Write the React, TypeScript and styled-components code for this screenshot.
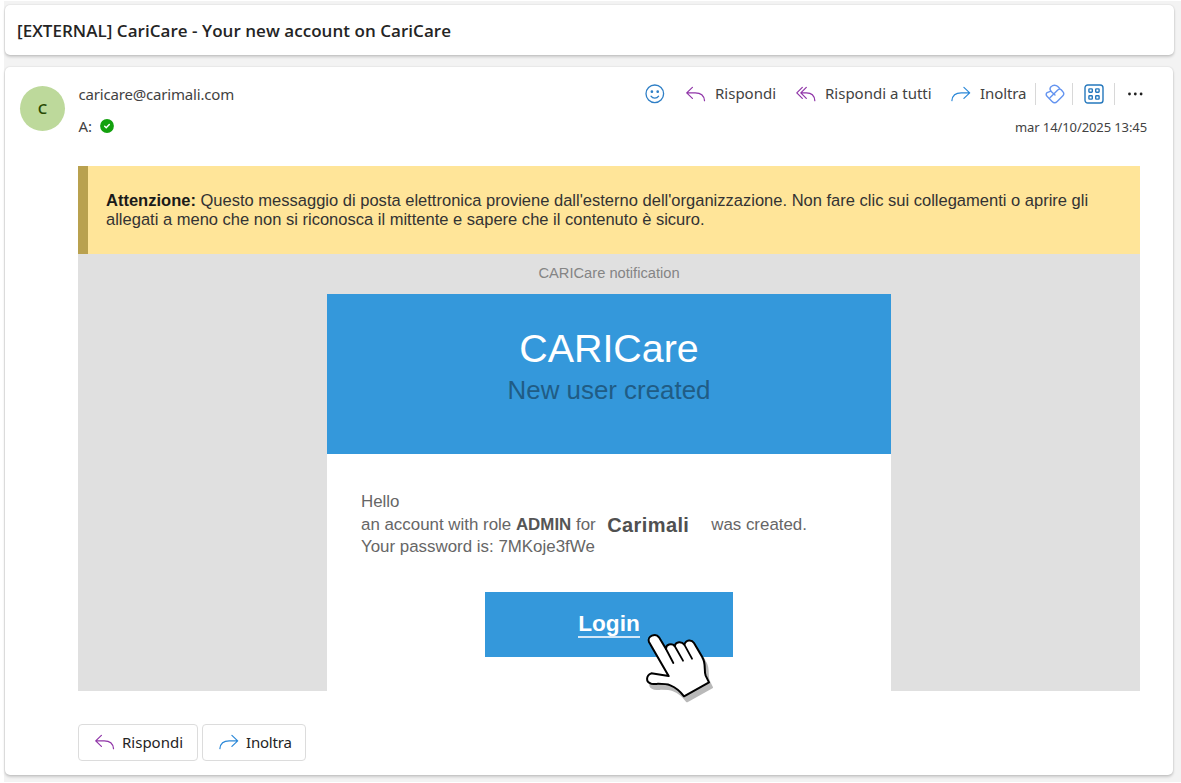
import React from "react";
import styled, { createGlobalStyle } from "styled-components";

const ui = `"Noto Sans", "Open Sans", sans-serif`;
const arial = `"Liberation Sans", Arial, sans-serif`;

const GlobalStyle = createGlobalStyle`
  * { box-sizing: border-box; }
  body { margin: 0; background: #fff; overflow: hidden; }
  svg { display: block; flex: none; }
`;

const Page = styled.div`
  width: 1181px;
  height: 783px;
  padding: 1px 0 1px 4px;
  background: #fff;
`;

const Pane = styled.main`
  height: 781px;
  padding: 4px 7px 6px 1px;
  display: flex;
  flex-direction: column;
  gap: 12px;
  background: #f3f3f3;
`;

const Card = styled.section`
  background: #fff;
  border-radius: 5px;
  box-shadow: 0 0 2px rgba(0, 0, 0, 0.14), 0 2px 3px rgba(0, 0, 0, 0.17);
`;

const TitleCard = styled(Card)`
  height: 50px;
  flex: none;
  padding: 2px 12px 0;
  display: flex;
  align-items: center;
`;

const MessageCard = styled(Card)`
  width: 1168px;
  height: 708px;
  flex: none;
  padding: 18px 26px 0 15px;
`;

const Label = styled.span<{ $size?: number; $spacing?: number; $color?: string }>`
  font-family: ${ui};
  font-size: ${(p) => p.$size ?? 15}px;
  letter-spacing: ${(p) => p.$spacing ?? 0}px;
  color: ${(p) => p.$color ?? "#424242"};
  line-height: 20px;
  white-space: nowrap;
`;

const Subject = styled.h1`
  margin: 0;
  font: 600 17px/20px "Open Sans", sans-serif;
  letter-spacing: 0.04px;
  color: #242424;
  white-space: nowrap;
`;

const Header = styled.header`
  height: 81px;
  display: flex;
`;

const Avatar = styled.div`
  width: 45px;
  height: 45px;
  margin-top: 1px;
  padding-bottom: 2px;
  border-radius: 50%;
  background: #bdd99b;
  color: #294903;
  display: flex;
  align-items: center;
  justify-content: center;
  font: 600 15px/20px "Open Sans", sans-serif;
`;

const Sender = styled.div`
  margin: -1px 0 0 13.5px;
  display: flex;
  flex-direction: column;
  gap: 12px;
`;

const Recipient = styled.div`
  display: flex;
  align-items: center;
  gap: 8px;
`;

const Meta = styled.div`
  margin: -2px 0 0 auto;
  display: flex;
  flex-direction: column;
  align-items: flex-end;
  gap: 13px;
`;

const Toolbar = styled.div`
  height: 21px;
  display: flex;
  align-items: center;
  margin-right: 4px;
`;

const Action = styled.button<{ $width: number }>`
  width: ${(p) => p.$width}px;
  padding: 0;
  border: 0;
  background: none;
  display: flex;
  align-items: center;
  gap: 9px;
  ${Label} { padding-bottom: 1px; }
`;

const Divider = styled.i<{ $after: number }>`
  width: 1px;
  height: 22px;
  margin-right: ${(p) => p.$after}px;
  background: #d8d8d8;
`;

const Mail = styled.article`
  width: 1062px;
  margin-left: 58px;
  font-family: ${arial};
`;

const Warning = styled.p`
  margin: 0;
  height: 88px;
  padding: 25px 17px 0 18px;
  border-left: 10px solid #b9a14f;
  background: #ffe599;
  color: #333;
  font-size: 16.52px;
  line-height: 19px;
  white-space: nowrap;
  b { color: #1a1a1a; }
`;

const Line = styled.span`
  display: block;
`;

const Backdrop = styled.div`
  height: 437px;
  background: #e0e0e0;
  display: flex;
  flex-direction: column;
  align-items: center;
`;

const Preheader = styled.div`
  height: 40px;
  line-height: 39px;
  font-size: 14.7px;
  color: #858585;
`;

const Banner = styled.div`
  width: 564px;
  height: 160px;
  padding-top: 31px;
  background: #3498db;
  text-align: center;
`;

const Brand = styled.h2`
  margin: 0;
  font-size: 39.4px;
  font-weight: 400;
  line-height: 47px;
  color: #fff;
`;

const Tagline = styled.div`
  font-size: 25.9px;
  line-height: 36px;
  color: #205c85;
`;

const Content = styled.div`
  width: 564px;
  height: 237px;
  padding: 37px 34px 0;
  background: #fff;
  color: #666;
  font-size: 16.9px;
  line-height: 22.6px;
  white-space: nowrap;
`;

const TextRow = styled.div`
  height: 22.6px;
  display: flex;
  align-items: center;
  b { color: #555; }
`;

const Company = styled.strong`
  width: 104px;
  margin-left: 11.5px;
  font-size: 20px;
  letter-spacing: 0.4px;
  color: #505050;
`;

const Login = styled.a`
  position: relative;
  width: 248px;
  height: 65px;
  margin: 33px 0 0 124px;
  display: flex;
  align-items: center;
  justify-content: center;
  background: #3498db;
  color: #fff;
  font-size: 22.6px;
  font-weight: 700;
`;

const LoginText = styled.span`
  height: 26px;
  margin-top: 1px;
  line-height: 24px;
  border-bottom: 2px solid #d3e8f8;
`;

const Pointer = styled.svg`
  position: absolute;
  left: 135px;
  top: -12px;
  z-index: 1;
`;

const Replies = styled.footer`
  margin: 33px 0 0 58px;
  display: flex;
  gap: 4px;
`;

const ReplyButton = styled.button<{ $width: number }>`
  width: ${(p) => p.$width}px;
  height: 37px;
  padding: 0 0 2px 16px;
  display: flex;
  align-items: center;
  gap: 7px;
  border: 1px solid #dcdcdc;
  border-radius: 4px;
  background: #fff;
`;

const Stroke = ({ color, children, weight = 1.2 }: {
  color: string; children: React.ReactNode; weight?: number;
}) => (
  <svg width="20" height="20" viewBox="0 0 20 20" fill="none" stroke={color}
    strokeWidth={weight} strokeLinecap="round" strokeLinejoin="round">{children}</svg>
);

const ReplyIcon = () => (
  <Stroke color="#9035a8"><path d="M6.4 3.4.7 8.9l5.700 5.500M.9 8.900H9.200c5.400 0 8.800 2.600 9.300 7.700" /></Stroke>
);
const ReplyAllIcon = () => (
  <Stroke color="#9035a8">
    <path d="M6.3 3.4.8 8.900l5.500 5.500M10.300 3.400 4.800 8.900l5.500 5.500M5 8.900h5.400c5 0 8 2.600 8.400 7.700" />
  </Stroke>
);
const ForwardIcon = () => (
  <Stroke color="#2b88d8"><path d="m12.900 3.400 5.800 5.500-5.800 5.500M18.500 8.900h-8.300c-5.400 0-8.800 2.600-9.300 7.700" /></Stroke>
);
const SmileIcon = () => (
  <Stroke color="#2f7fc6" weight={1.3}>
    <circle cx="9.800" cy="9.800" r="8.800" />
    <path d="M6 12.200c1.800 2.600 5.800 2.600 7.600 0" />
    <circle cx="6.900" cy="7.700" r=".7" fill="#2f7fc6" />
    <circle cx="12.700" cy="7.700" r=".7" fill="#2f7fc6" />
  </Stroke>
);
const CopilotIcon = () => (
  <Stroke color="#6494f0" weight={1.4}>
    <path d="M10 11.100 6.200 7.400a3.400 3.400 0 0 1 0-4.800c1.700-1.900 4.800-1.900 6.600 0l1.900 2" />
    <path d="M5.900 7.200 2.100 8.600c-1.200.9-1.200 2.500-.1 3.600l5.100 5.200c1.500 1.500 3.600 1.500 5.100 0l5.700-5.700c1.200-1.200 1.200-2.800 0-4l-1.700-1.900a2.200 2.200 0 0 0-3.200 0l-7.800 7.800" />
  </Stroke>
);
const AppsIcon = () => (
  <Stroke color="#2578bd" weight={1.4}>
    <rect x="1" y="1" width="18" height="18" rx="2.8" />
    {[4.9, 11.7].map((y) => [4.9, 11.7].map((x) => (
      <rect key={`${x}-${y}`} x={x} y={y} width="3.4" height="3.4" rx=".7" />
    )))}
  </Stroke>
);
const MoreIcon = () => (
  <svg width="16" height="4" viewBox="0 0 16 4" fill="#1f1f1f">
    <circle cx="2.500" cy="2" r="1.400" /><circle cx="8.300" cy="2" r="1.400" /><circle cx="14.100" cy="2" r="1.400" />
  </svg>
);
const VerifiedIcon = () => (
  <svg width="14" height="14" viewBox="0 0 14 14">
    <circle cx="7" cy="7" r="6.9" fill="#13a10e" />
    <path d="m4.700 7.300 1.500 1.400 3.100-3.200" fill="none" stroke="#fff" strokeWidth="1.500" strokeLinecap="round" />
  </svg>
);

const handShape =
  "M146 288 L87 186 C80 169 107 157 117 172 L138 207 C137 193 155 188 164 198 C168 184 185 184 193 194 C198 178 215 178 222 189 L247 232 C259 250 251 272 257 287 L267 307 L192 349 C181 334 168 323 151 316 C132 309 111 313 94 311 C76 307 78 286 94 280 Z";

const HandPointer = () => (
  <Pointer width="130" height="130" viewBox="0 0 390 390" strokeLinejoin="round" strokeLinecap="round">
    <path d={handShape} transform="translate(9 15)" fill="#000" stroke="#000" strokeWidth="6" opacity=".27" />
    <path d={handShape} fill="#fff" stroke="#000" strokeWidth="6" />
    <path d="m138 207 22 42M164 198l25 44M193 194l23 42" fill="none" stroke="#000" strokeWidth="5.5" />
  </Pointer>
);

export default function App() {
  return (
    <Page>
      <GlobalStyle />
      <Pane>
        <TitleCard>
          <Subject>[EXTERNAL] CariCare - Your new account on CariCare</Subject>
        </TitleCard>
        <MessageCard>
          <Header>
            <Avatar>C</Avatar>
            <Sender>
              <Label $spacing={-0.18}>caricare@carimali.com</Label>
              <Recipient><Label>A:</Label><VerifiedIcon /></Recipient>
            </Sender>
            <Meta>
              <Toolbar>
                <Action $width={41}><SmileIcon /></Action>
                <Action $width={110}><ReplyIcon /><Label>Rispondi</Label></Action>
                <Action $width={155}><ReplyAllIcon /><Label>Rispondi a tutti</Label></Action>
                <Action $width={84}><ForwardIcon /><Label $spacing={-0.1}>Inoltra</Label></Action>
                <Divider $after={9} />
                <Action $width={27}><CopilotIcon /></Action>
                <Divider $after={11} />
                <Action $width={30}><AppsIcon /></Action>
                <Divider $after={12} />
                <Action $width={16}><MoreIcon /></Action>
              </Toolbar>
              <Label $size={13} $spacing={-0.1}>mar 14/10/2025 13:45</Label>
            </Meta>
          </Header>
          <Mail>
            <Warning>
              <Line><b>Attenzione:</b> Questo messaggio di posta elettronica proviene dall'esterno dell'organizzazione. Non fare clic sui collegamenti o aprire gli</Line>
              <Line>allegati a meno che non si riconosca il mittente e sapere che il contenuto è sicuro.</Line>
            </Warning>
            <Backdrop>
              <Preheader>CARICare notification</Preheader>
              <Banner>
                <Brand>CARICare</Brand>
                <Tagline>New user created</Tagline>
              </Banner>
              <Content>
                <TextRow>Hello</TextRow>
                <TextRow>
                  <span>an account with role <b>ADMIN</b> for</span>
                  <Company>Carimali</Company>
                  <span>was created.</span>
                </TextRow>
                <TextRow>Your password is: 7MKoje3fWe</TextRow>
                <Login><LoginText>Login</LoginText><HandPointer /></Login>
              </Content>
            </Backdrop>
          </Mail>
          <Replies>
            <ReplyButton $width={120}><ReplyIcon /><Label $color="#242424">Rispondi</Label></ReplyButton>
            <ReplyButton $width={104}><ForwardIcon /><Label $color="#242424" $spacing={-0.2}>Inoltra</Label></ReplyButton>
          </Replies>
        </MessageCard>
      </Pane>
    </Page>
  );
}
